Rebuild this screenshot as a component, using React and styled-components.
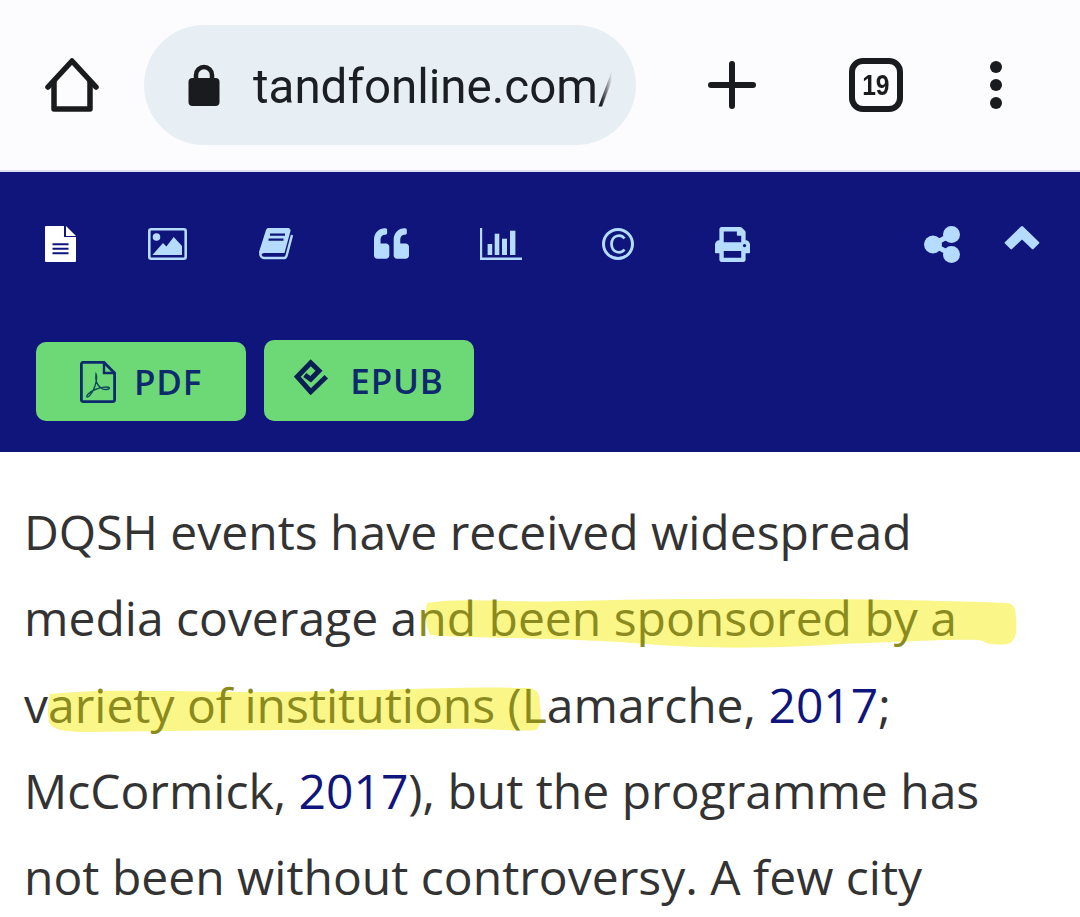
import styled, { createGlobalStyle } from "styled-components";
import { FaQuoteLeft, FaPrint } from "react-icons/fa";

const GlobalStyle = createGlobalStyle`
  html, body {
    margin: 0;
    padding: 0;
    background: #fff;
    overflow: hidden;
  }
`;

const Page = styled.div`
  width: 1080px;
  height: 917px;
  overflow: hidden;
  display: flex;
  flex-direction: column;
`;

const BrowserBar = styled.header`
  height: 170px;
  flex: none;
  display: flex;
  align-items: center;
  background: #fcfcff;
  border-bottom: 2px solid #dde2f1;
  box-sizing: content-box;
  color: #191b1e;
`;

const HomeButton = styled.svg`
  width: 56px;
  height: 56px;
  margin-left: 44px;
  flex: none;
`;

const UrlPill = styled.div`
  width: 492px;
  height: 120px;
  margin-left: 44px;
  border-radius: 60px;
  background: #e8eff4;
  display: flex;
  align-items: center;
  flex: none;
`;

const LockIcon = styled.svg`
  width: 32px;
  height: 42px;
  margin-left: 44px;
  flex: none;
`;

const UrlText = styled.div`
  width: 359px;
  margin-left: 33px;
  padding-top: 3px;
  overflow: hidden;
  white-space: nowrap;
  font-family: Roboto, sans-serif;
  font-size: 47.5px;
  line-height: 60px;
  color: #1b1e22;
  -webkit-mask-image: linear-gradient(to right, #000 97%, transparent 100%);
  mask-image: linear-gradient(to right, #000 97%, transparent 100%);
`;

const PlusIcon = styled.svg`
  width: 48px;
  height: 48px;
  margin-left: 72px;
  flex: none;
`;

const TabCount = styled.div`
  width: 54px;
  height: 54px;
  margin-left: 93px;
  flex: none;
  box-sizing: border-box;
  border: 6px solid #191b1e;
  border-radius: 14px;
  display: flex;
  align-items: center;
  justify-content: center;
  font-family: "Liberation Sans", sans-serif;
  font-weight: 700;
  font-size: 29px;
`;

const TabNumber = styled.span`
  display: block;
  transform: scaleX(0.85);
  letter-spacing: -0.5px;
`;

const MoreDots = styled.div`
  margin-left: 87px;
  display: flex;
  flex-direction: column;
  gap: 6px;
  flex: none;
`;

const Dot = styled.span`
  width: 12px;
  height: 12px;
  border-radius: 50%;
  background: #191b1e;
`;

const ArticleBar = styled.section`
  height: 280px;
  flex: none;
  background: #10157c;
  display: flex;
  flex-direction: column;
`;

const ToolRow = styled.div`
  display: flex;
  align-items: center;
  height: 44px;
  margin-top: 50px;
  color: #b5dcff;
`;

const Tool = styled.span`
  display: flex;
  align-items: center;
  justify-content: center;
  flex: none;
  width: ${(p) => p.$w}px;
  margin-left: ${(p) => p.$gap}px;
  color: ${(p) => (p.$active ? "#fff" : "inherit")};
  transform: translateY(${(p) => p.$dy || 0}px);

  svg {
    display: block;
  }
`;

const ButtonRow = styled.div`
  display: flex;
  align-items: flex-end;
  gap: 18px;
  height: 81px;
  margin-top: 74px;
  padding-left: 36px;
`;

const DownloadButton = styled.a`
  width: 210px;
  height: ${(p) => p.$h}px;
  box-sizing: border-box;
  border-radius: 10px;
  background: #6dd976;
  color: #0e2a6e;
  display: flex;
  align-items: center;
  justify-content: center;
  gap: ${(p) => p.$gap}px;
  font-family: "Open Sans", sans-serif;
  font-weight: 560;
  font-size: 35px;
  letter-spacing: 0.8px;

  svg {
    flex: none;
  }
`;

const Article = styled.article`
  isolation: isolate;
  background: #fff;
  padding: 37px 0 0 24px;
  font-family: "Open Sans", sans-serif;
  font-size: 48px;
  line-height: 86.3px;
  color: #333;
  width: 1000px;
`;

const Marked = styled.span`
  position: relative;
  color: #8a8a1e;
`;

const Swash = styled.svg`
  position: absolute;
  z-index: -1;
  left: ${(p) => p.$left}px;
  top: ${(p) => p.$top}px;
`;

const Ref = styled.a`
  color: #10157c;
`;

const App = () => {
  return (
    <>
      <GlobalStyle />
      <Page>
        <BrowserBar>
          <HomeButton viewBox="0 0 56 56" fill="none" stroke="#191b1e" strokeWidth="5.5" strokeLinecap="round" strokeLinejoin="round">
            <path d="M4 30 L28 4 L52 30" />
            <path d="M10 25 V52 H46 V25" />
          </HomeButton>
          <UrlPill>
            <LockIcon viewBox="0 0 32 42">
              <path d="M8 16 V11 a8 8 0 0 1 16 0 V16" fill="none" stroke="#191b1e" strokeWidth="4.5" />
              <rect x="0.5" y="14" width="31" height="28" rx="4" fill="#191b1e" />
            </LockIcon>
            <UrlText>tandfonline.com/</UrlText>
          </UrlPill>
          <PlusIcon viewBox="0 0 48 48" stroke="#191b1e" strokeWidth="6" strokeLinecap="round">
            <path d="M24 3 V45 M3 24 H45" />
          </PlusIcon>
          <TabCount>
            <TabNumber>19</TabNumber>
          </TabCount>
          <MoreDots>
            <Dot />
            <Dot />
            <Dot />
          </MoreDots>
        </BrowserBar>

        <ArticleBar>
          <ToolRow>
            <Tool $w={31} $gap={45} $active>
              <svg width="31" height="36" viewBox="0 0 31 36">
                <path d="M1 0 H19 V11 H31 V35 a1 1 0 0 1 -1 1 H1 a1 1 0 0 1 -1 -1 V1 a1 1 0 0 1 1 -1 Z" fill="currentColor" />
                <path d="M21 0 L31 10 H21 Z" fill="currentColor" />
                <path d="M7.5 18.3 H23.5 M7.5 22.8 H23.5 M7.5 27.3 H23.5" stroke="#10157c" strokeWidth="2" />
              </svg>
            </Tool>
            <Tool $w={39} $gap={72}>
              <svg width="39" height="32" viewBox="0 0 39 32">
                <rect x="1.3" y="1.3" width="36.4" height="29.4" rx="2" fill="none" stroke="currentColor" strokeWidth="2.6" />
                <circle cx="8.5" cy="9" r="3.8" fill="currentColor" />
                <path d="M4.4 27 L15 15 L18.4 18.4 L25.7 9 L34 18 V27 Z" fill="currentColor" />
              </svg>
            </Tool>
            <Tool $w={34} $gap={72}>
              <svg width="34" height="32" viewBox="0 0 34 32">
                <path d="M9 0 H29 a2.5 2.5 0 0 1 2.5 3 L25.5 25 H6 a4 4 0 0 0 -4 2 H0.5 L0 24 L7 2 a3 3 0 0 1 2 -2 Z" fill="currentColor" />
                <path d="M33 7 L27.5 28 a3 3 0 0 1 -3 2 H5 a3.5 3.5 0 0 1 -3.5 -4" fill="none" stroke="currentColor" strokeWidth="2.4" />
                <path d="M11 6.7 H26 M9.5 11.7 H24.5" stroke="#10157c" strokeWidth="2.2" />
              </svg>
            </Tool>
            <Tool $w={36} $gap={80} $dy={-1}>
              <FaQuoteLeft size={35} />
            </Tool>
            <Tool $w={42} $gap={71}>
              <svg width="42" height="32" viewBox="0 0 42 32" fill="currentColor">
                <path d="M0 0 H2.2 V29.5 H42 V32 H0 Z" />
                <rect x="7.6" y="16" width="4.6" height="11" />
                <rect x="14.7" y="5.7" width="4.6" height="21.3" />
                <rect x="22" y="10.7" width="5" height="16.3" />
                <rect x="30" y="2.7" width="5.4" height="24.3" />
              </svg>
            </Tool>
            <Tool $w={32} $gap={80}>
              <svg width="32" height="32" viewBox="0 0 32 32" fill="none" stroke="currentColor">
                <circle cx="16" cy="16" r="14.5" strokeWidth="3" />
                <path d="M22.5 10.5 C19 6 10 6.5 9.5 16 C10 25.5 19 26 22.5 21.5" strokeWidth="2.8" />
              </svg>
            </Tool>
            <Tool $w={35} $gap={81}>
              <FaPrint size={35} />
            </Tool>
            <Tool $w={37} $gap={174}>
              <svg width="37" height="37" viewBox="0 0 37 37" fill="currentColor">
                <circle cx="27.5" cy="8.5" r="8.5" />
                <circle cx="27.5" cy="28.5" r="8.5" />
                <circle cx="9" cy="18.5" r="9" />
                <path d="M9 18.5 L27.5 8.5 M9 18.5 L27.5 28.5" stroke="currentColor" strokeWidth="5" />
              </svg>
            </Tool>
            <Tool $w={36} $gap={43} $dy={-6}>
              <svg width="36" height="24" viewBox="0 0 36 24" fill="currentColor">
                <path d="M17 0.5 a1.5 1.5 0 0 1 2 0 L35 16 a1 1 0 0 1 0 1.5 L29.5 23 a1 1 0 0 1 -1.5 0 L18 13.5 L8 23 a1 1 0 0 1 -1.5 0 L1 17.5 a1 1 0 0 1 0 -1.5 Z" />
              </svg>
            </Tool>
          </ToolRow>
          <ButtonRow>
            <DownloadButton $h={79} $gap={18}>
              <svg width="36" height="42" viewBox="0 0 36 42" fill="none" stroke="#0e2a6e">
                <path d="M2 1.4 H24 L34.6 12 V39 a1.6 1.6 0 0 1 -1.6 1.6 H3 a1.6 1.6 0 0 1 -1.6 -1.6 V3 a1.6 1.6 0 0 1 1.6 -1.6 Z" strokeWidth="2.8" />
                <path d="M24 1.4 V12 H34.6" strokeWidth="2.4" />
                <path d="M16 13 C15 19 17 24 21 27 C24 29.5 30 28.5 29.5 27 C28.5 25 21 26 14 29 C9 31.5 6 35 7 36 C8.5 37 13 31 15 25 C16.5 20 17 15 16 13 Z" strokeWidth="1.4" stroke="#0d4a5a" />
              </svg>
              PDF
            </DownloadButton>
            <DownloadButton $h={81} $gap={20}>
              <svg width="36" height="36" viewBox="0 0 36 36" fill="none" stroke="#0a1f52" strokeWidth="5" style={{ marginTop: -8 }}>
                <path d="M32.3 17.7 L16.7 32.7 L3.3 17.7 L16.7 3.7 L25 11.7 L16.7 20.3 L10.7 16" strokeLinejoin="miter" />
              </svg>
              EPUB
            </DownloadButton>
          </ButtonRow>
        </ArticleBar>

        <Article>
          DQSH events have received widespread media coverage a
          <Marked>
            <Swash $left={5} $top={6} width="600" height="60" viewBox="0 0 600 60">
              <path fill="#faf688" d="M5 12 C40 6 80 12 150 10 C300 6 480 8 584 12 C592 12 594 18 594 28 C595 42 594 50 586 53 C576 54 566 54 561 50 C555 47 500 50 420 53 C340 58 280 58 210 52 C130 46 60 48 8 44 C3 34 3 22 5 12 Z" />
            </Swash>
            nd been sponsored by a
          </Marked>{" "}
          v
          <Marked>
            <Swash $left={-2} $top={10} width="500" height="56" viewBox="0 0 500 56">
              <path fill="#faf688" d="M4 12 C60 6 120 10 220 10 C320 10 400 4 480 6 C492 6 494 12 494 24 C495 34 496 42 490 48 C470 50 440 46 400 47 C300 48 150 48 40 50 C20 50 6 48 3 40 C1 30 2 20 4 12 Z" />
            </Swash>
            ariety of institutions (L
          </Marked>
          amarche, <Ref>2017</Ref>; McCormick, <Ref>2017</Ref>), but the programme has not been without controversy. A few city
        </Article>
      </Page>
    </>
  );
};

export default App;
